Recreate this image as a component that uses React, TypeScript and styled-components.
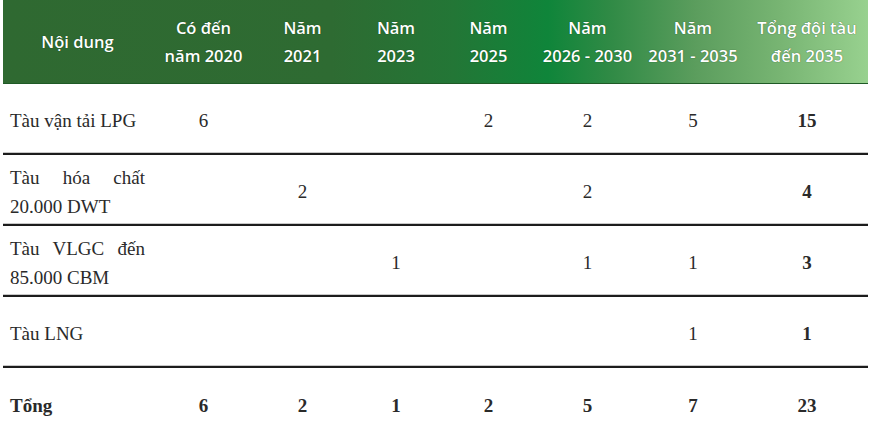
import * as React from 'react'
import styled, { createGlobalStyle } from 'styled-components'

const GlobalStyle = createGlobalStyle`
  html, body {
    margin: 0;
    padding: 0;
    background: #ffffff;
  }
`

const COLUMNS = '149px 103px 95px 92px 93px 105px 106px 122px'

const Page = styled.div`
  width: 871px;
  height: 438px;
  padding: 0 3px;
  box-sizing: border-box;
  overflow: hidden;
`

const HeaderRow = styled.div`
  display: grid;
  grid-template-columns: ${COLUMNS};
  height: 84px;
  box-sizing: border-box;
  border-bottom: 1px solid #1f5a26;
  background: linear-gradient(
    to right,
    #2f6931 0%,
    #2e6b32 38%,
    #237636 52%,
    #0f853a 63%,
    #2f8a45 70%,
    #5b9d5d 80%,
    #78b573 90%,
    #98d18f 100%
  );
`

const HeadCell = styled.div`
  display: flex;
  align-items: center;
  justify-content: center;
  padding-top: 1px;
  text-align: center;
  font-family: 'Open Sans', 'Noto Sans', sans-serif;
  font-weight: 600;
  font-size: 16.5px;
  line-height: 28px;
  color: #ffffff;
  text-shadow: 0 0 1px rgba(0, 40, 0, 0.7);
  white-space: nowrap;
`

const BodyRow = styled.div<{ $last?: boolean }>`
  display: grid;
  grid-template-columns: ${COLUMNS};
  height: ${p => (p.$last ? '70px' : '71px')};
  box-sizing: border-box;
  padding-top: 4px;
  border-bottom: ${p => (p.$last ? 'none' : '2px solid #1c1c1c')};
  box-shadow: ${p => (p.$last ? 'none' : 'inset 0 -1px 0 #c8c8c8')};
`

const Cell = styled.div<{ $bold?: boolean }>`
  display: flex;
  align-items: center;
  justify-content: center;
  font-family: 'Liberation Serif', 'DejaVu Serif', serif;
  font-size: 19px;
  line-height: 29px;
  font-weight: ${p => (p.$bold ? 700 : 400)};
  color: #2a2a2a;
`

const LabelCell = styled(Cell)`
  justify-content: flex-start;
  padding: 0 7px;
  text-align: justify;
`

const headers = [
  ['Nội dung'],
  ['Có đến', 'năm 2020'],
  ['Năm', '2021'],
  ['Năm', '2023'],
  ['Năm', '2025'],
  ['Năm', '2026 - 2030'],
  ['Năm', '2031 - 2035'],
  ['Tổng đội tàu', 'đến 2035'],
]

const rows: { label: string; values: string[]; bold?: boolean }[] = [
  { label: 'Tàu vận tải LPG', values: ['6', '', '', '2', '2', '5', '15'] },
  { label: 'Tàu hóa chất 20.000 DWT', values: ['', '2', '', '', '2', '', '4'] },
  { label: 'Tàu VLGC đến 85.000 CBM', values: ['', '', '1', '', '1', '1', '3'] },
  { label: 'Tàu LNG', values: ['', '', '', '', '', '1', '1'] },
  { label: 'Tổng', values: ['6', '2', '1', '2', '5', '7', '23'], bold: true },
]

export default function App() {
  return (
    <Page>
      <GlobalStyle />
      <HeaderRow>
        {headers.map((lines, i) => (
          <HeadCell key={i}>
            <div>
              {lines.map((l, j) => (
                <div key={j}>{l}</div>
              ))}
            </div>
          </HeadCell>
        ))}
      </HeaderRow>
      {rows.map((r, i) => (
        <BodyRow key={i} $last={i === rows.length - 1}>
          <LabelCell $bold={r.bold}>
            <div>{r.label}</div>
          </LabelCell>
          {r.values.map((v, j) => (
            <Cell key={j} $bold={r.bold || j === r.values.length - 1}>
              {v}
            </Cell>
          ))}
        </BodyRow>
      ))}
    </Page>
  )
}
